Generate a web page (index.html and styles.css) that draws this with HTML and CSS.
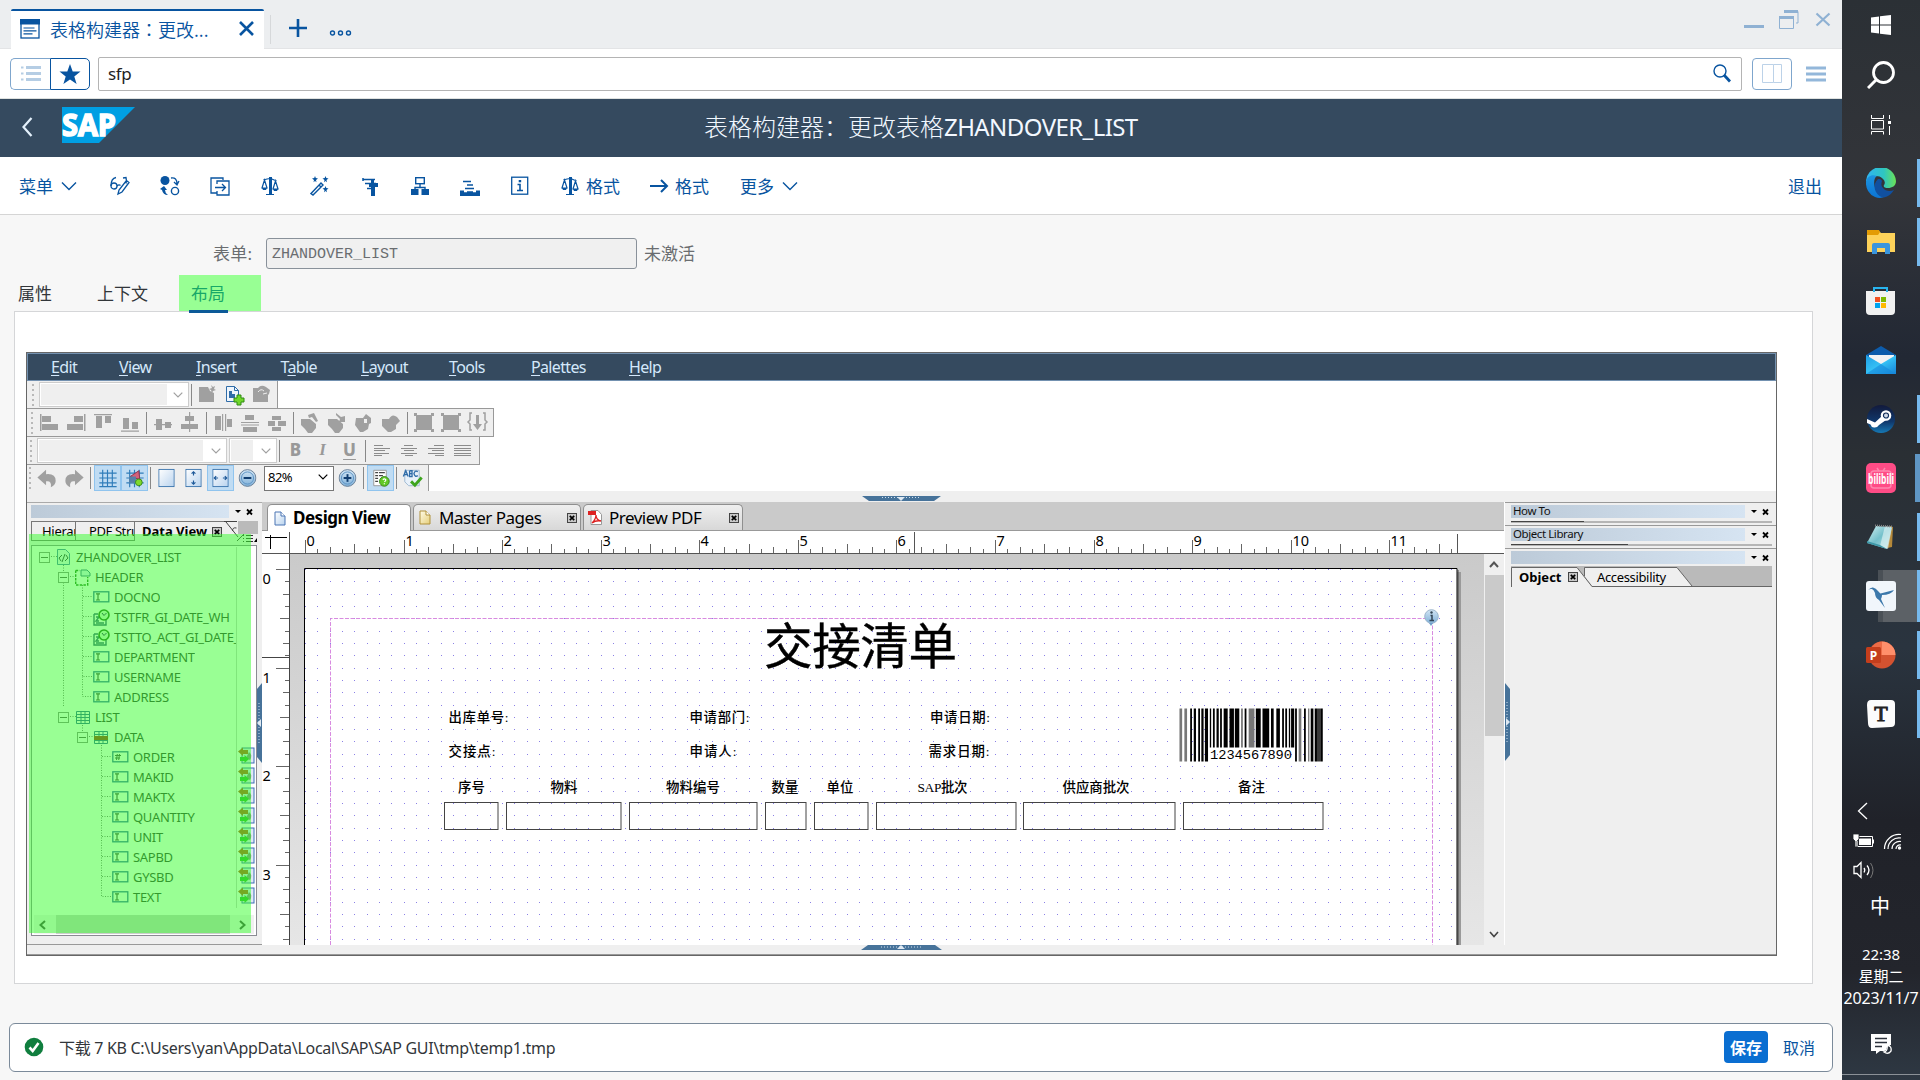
FILE: index.html
```html
<!DOCTYPE html>
<html lang="zh-CN">
<head>
<meta charset="utf-8">
<title>表格构建器：更改表格ZHANDOVER_LIST</title>
<link rel="stylesheet" href="styles.css">
</head>
<body>
<svg width="0" height="0" class="defs">
  <defs>
    <linearGradient id="gBlue" x1="0" y1="0" x2="1" y2="1"><stop offset="0" stop-color="#fff"/><stop offset="1" stop-color="#b9d3ee"/></linearGradient>
    <linearGradient id="gGold" x1="0" y1="0" x2="1" y2="1"><stop offset="0" stop-color="#fffbe8"/><stop offset="1" stop-color="#e6cf7a"/></linearGradient>
    <linearGradient id="gBall" x1="0" y1="0" x2="0" y2="1"><stop offset="0" stop-color="#d4e6f5"/><stop offset="1" stop-color="#7fb0d8"/></linearGradient>
    <linearGradient id="gEdge" x1="0" y1="0" x2="1" y2="0"><stop offset="0" stop-color="#2fb4f4"/><stop offset=".6" stop-color="#2fc6c0"/><stop offset="1" stop-color="#6be255"/></linearGradient>
    <linearGradient id="gEdge2" x1="0" y1="0" x2="0" y2="1"><stop offset="0" stop-color="#1d95e0"/><stop offset="1" stop-color="#0b74d4"/></linearGradient>
    <linearGradient id="gMail" x1="0" y1="0" x2="1" y2="1"><stop offset="0" stop-color="#1f9de6"/><stop offset=".5" stop-color="#35c1f5"/><stop offset="1" stop-color="#1583d8"/></linearGradient>
    <linearGradient id="gSteam" x1="0" y1="0" x2="0" y2="1"><stop offset="0" stop-color="#121a3c"/><stop offset=".6" stop-color="#10386c"/><stop offset="1" stop-color="#1679b5"/></linearGradient>
    <linearGradient id="gNote" x1="0" y1="0" x2="1" y2="1"><stop offset="0" stop-color="#d6f1f2"/><stop offset=".5" stop-color="#74c0cb"/><stop offset="1" stop-color="#b9e2e6"/></linearGradient>
    <symbol id="scale" viewBox="0 0 18 20"><path d="M9 1v17M5 18.500h8M2.500 3.500c3 0 4-1 6.500-1s3.500 2 6.500 2M3.500 4L1 12h5zM14.500 5L12 13h5z" fill="none" stroke="#0854a0" stroke-width="1.200"/><path d="M8 1h3v17H8zM1 12h5l-1 2H2zM12 13h5l-1 2h-3z" fill="#0854a0"/></symbol>
    <symbol id="chev" viewBox="0 0 16 10"><path d="M1 1.500l7 7 7-7" fill="none" stroke="#0854a0" stroke-width="1.400"/></symbol>
    <symbol id="field" viewBox="0 0 17 12"><rect x=".8" y=".8" width="15" height="10" fill="#fff" stroke="#2f62a0" stroke-width="1.300"/><path d="M3 2.800h4M3 9h4M5 3v6" stroke="#444" stroke-width="1.200"/></symbol>
    <symbol id="num" viewBox="0 0 17 12"><rect x=".8" y=".8" width="15" height="10" fill="#fff" stroke="#2f62a0" stroke-width="1.300"/><path d="M3 4.500h6M3 7h5M5.300 3L4.500 9M7.500 3L6.700 9" stroke="#444"/></symbol>
    <symbol id="clock" viewBox="0 0 17 17"><path d="M1 5v11h12v-5M1 5h4M3 8h3l-3 4h3M3 14h8" fill="none" stroke="#335577" stroke-width="1.400"/><circle cx="11" cy="6" r="5" fill="#d5f5d0" stroke="#1f6a12" stroke-width="1.600"/><path d="M9 4l2 2.500L13.500 4" fill="none" stroke="#225"/></symbol>
    <symbol id="bind" viewBox="0 0 17 17"><rect x="4" y="1" width="12" height="15" fill="#dfe8f6" stroke="#3d6cb4"/><path d="M11 5q4 3 1 8l-4-2z" fill="#888"/><path d="M0 4.500l5-4v2.500h5v4H5v2z" fill="#b5521c"/><path d="M11 12l-4.500-4v2H2v4h4.500v2z" fill="#35b22e"/></symbol>
    <symbol id="xbox" viewBox="0 0 10 10"><rect x=".5" y=".5" width="9" height="9" fill="#c8c8c8" stroke="#444"/><path d="M2.800 2.800l4.400 4.400M7.200 2.800L2.800 7.200" stroke="#000" stroke-width="1.700"/></symbol>
    <symbol id="ctl" viewBox="0 0 20 8"><path d="M0 2h6L3 5z"/><path d="M12 1.500l5 5M17 1.500l-5 5" stroke="#000" stroke-width="1.800"/></symbol>
    <symbol id="page" viewBox="0 0 12 15"><path d="M1 1h6l4 4v9H1z" fill="url(#gBlue)" stroke="#4b74b4"/><path d="M7 1v4h4" fill="#fff" stroke="#4b74b4"/></symbol>
    <symbol id="pageg" viewBox="0 0 12 15"><path d="M1 1h6l4 4v9H1z" fill="url(#gGold)" stroke="#b0913a"/><path d="M7 1v4h4" fill="#fff" stroke="#b0913a"/></symbol>
    <symbol id="drop" viewBox="0 0 10 6"><path d="M.7.700L5 5 9.300.700" fill="none" stroke="currentColor" stroke-width="1.200"/></symbol>
    <symbol id="ball" viewBox="0 0 19 19"><circle cx="9.500" cy="9.500" r="8.700" fill="url(#gBall)" stroke="#6a8098"/><circle cx="9.500" cy="9.500" r="6.300" fill="none" stroke="#5d93c4"/><path d="M5.500 9.500h8" stroke="#123e70" stroke-width="2"/></symbol>
    <symbol id="sheet" viewBox="0 0 17 19"><rect x=".5" y=".5" width="16" height="18" fill="url(#gBlue)" stroke="#2f6ca8"/></symbol>
  </defs>
</svg>

<div class="screen">
<main class="app">
  <header class="tabstrip">
    <div class="wtab">
      <svg width="20" height="20" viewBox="0 0 20 20"><rect x="1" y="1" width="18" height="18" fill="#fff" stroke="#0854a0" stroke-width="1.300"/><path d="M0 0h20v5.500H0z" fill="#0854a0"/><path d="M3.500 9h11M3.500 11.800h13M3.500 14.800h9" stroke="#0854a0" stroke-width="1.200"/></svg>
      <span class="wtab-t">表格构建器<span class="colon" lang="zh-TW">：</span>更改...</span>
      <svg width="15" height="15" viewBox="0 0 15 15"><path d="M1 1l13 13M14 1L1 14" stroke="#0854a0" stroke-width="2.600"/></svg>
    </div>
    <i class="vsep"></i>
    <svg class="plus" width="18" height="18" viewBox="0 0 18 18"><path d="M9 0v18M0 9h18" stroke="#0854a0" stroke-width="2.600"/></svg>
    <svg class="dots" width="24" height="8" viewBox="0 0 24 8"><g fill="none" stroke="#0854a0" stroke-width="1.400"><circle cx="3.500" cy="4" r="2"/><circle cx="11.500" cy="4" r="2"/><circle cx="19.500" cy="4" r="2"/></g></svg>
    <svg class="winctl" width="88" height="22" viewBox="0 0 88 22"><g stroke="#8fb1d3" fill="none"><path d="M0 17.500h20" stroke-width="3"/><path d="M35.500 8v11.500h14V8M40 2.500h14V14h-2" /><path d="M35 8.500h15M40 2.500h14" stroke-width="3"/><path d="M72.500 4.500l13 12M85.500 4.500l-13 12" stroke-width="2.200"/></g></svg>
  </header>
  <section class="cmd">
    <div class="seg"><span class="seg1"><svg width="22" height="18" viewBox="0 0 22 18"><path d="M6 2.500h15M6 8.500h15M6 14.500h15" stroke="#b5cde4" stroke-width="3"/><path d="M1 2.500h2.500M1 8.500h2.500M1 14.500h2.500" stroke="#b5cde4" stroke-width="2"/></svg></span><span class="seg2"><svg width="22" height="21" viewBox="0 0 22 21"><path d="M11 0l2.700 7.600H21.500l-6.200 4.800L17.600 20 11 15.500 4.400 20l2.300-7.600L.5 7.600h7.800z" fill="#0854a0"/></svg></span></div>
    <div class="cmdin"><span>sfp</span><svg width="20" height="19" viewBox="0 0 20 19"><circle cx="8" cy="7" r="6" fill="none" stroke="#0854a0" stroke-width="1.400"/><path d="M12 11l6 6.500" stroke="#0854a0" stroke-width="2.800"/></svg></div>
    <div class="split"><svg width="20" height="20" viewBox="0 0 20 20"><path d="M.5.500h11v18H.5zM11.500.500h8v18h-8" fill="none" stroke="#bcd2e8"/></svg></div>
    <svg class="burger" width="20" height="16" viewBox="0 0 20 16"><path d="M0 2h20M0 8h20M0 14h20" stroke="#93b7da" stroke-width="3"/></svg>
  </section>
  <section class="shell">
    <svg width="12" height="20" viewBox="0 0 12 20"><path d="M9.500 1L1.500 10l8 9" fill="none" stroke="#e4f1fc" stroke-width="2.200"/></svg>
    <svg class="sap" width="73" height="36" viewBox="0 0 73 36"><path d="M0 0h73L37 36H0z" fill="#009fe3"/><text x="0" y="29" textLength="54" lengthAdjust="spacingAndGlyphs" class="saptx">SAP</text></svg>
    <h1>表格构建器：更改表格<span>ZHANDOVER_LIST</span></h1>
  </section>
  <nav class="bar">
    <span class="mnu">菜单<svg width="16" height="10"><use href="#chev"/></svg></span>
    <i><svg width="20" height="20" viewBox="0 0 20 20"><g fill="none" stroke="#0854a0" stroke-width="1.300"><circle cx="4" cy="10" r="3"/><path d="M1 10C1 5 3 2 6 1.500M7 10q2-2 3.500-.5M13 2l3-.5q1 4 0 6M8 18l1-4 7.500-9.500 2.500 2L12 16z"/></g></svg></i>
    <i><svg width="20" height="20" viewBox="0 0 20 20"><circle cx="5" cy="4.500" r="4.500" fill="#0854a0"/><circle cx="15" cy="15" r="3.600" fill="none" stroke="#0854a0" stroke-width="1.400"/><path d="M11 2q6-1 6 6M14 6l3 3 2-4" fill="none" stroke="#0854a0" stroke-width="1.300"/><path d="M0 13l4-3 3 4H5q0 3 3 5-5 0-6-5z" fill="#0854a0"/></svg></i>
    <i><svg width="20" height="20" viewBox="0 0 20 20"><path d="M7 17H1V2h12v2M7 8V5h12v14H7v-4M5 11.500h10M12 8l3.500 3.500L12 15" fill="none" stroke="#0854a0" stroke-width="1.300"/></svg></i>
    <i><svg width="18" height="20"><use href="#scale"/></svg></i>
    <i><svg width="20" height="20" viewBox="0 0 20 20"><path d="M1 17.500L11 7l2 2L3 19zM9 9l2 2" fill="none" stroke="#0854a0" stroke-width="1.400"/><path d="M5 0l.8 2L8 2.500 6 4l.5 2.300L5 5 3.500 6.300 4 4 2 2.500l2.200-.5zM15.500 0l.8 2 2.200.5-2 1.500.5 2.300-1.500-1.300L14 6.300l.5-2.300-2-1.500 2.200-.5zM15.500 10l.8 2 2.200.5-2 1.500.5 2.300-1.500-1.300-1.500 1.300.5-2.300-2-1.500 2.200-.5z" fill="#0854a0"/></svg></i>
    <i><svg width="18" height="20" viewBox="0 0 18 20"><path d="M2 3.500h12M2 2v3M4 7.500h11M6 12.500h5" stroke="#0854a0" stroke-width="1.500"/><path d="M10 3h3v4h4v4h-3v9h-4v-9H8V8h2z" fill="#0854a0"/></svg></i>
    <i><svg width="18" height="20" viewBox="0 0 18 20"><rect x="4.700" y="1.700" width="8.600" height="6" fill="none" stroke="#0854a0" stroke-width="1.400"/><path d="M9 8v4M4 13v-1.500h10V13" fill="none" stroke="#0854a0" stroke-width="1.400"/><path d="M0 13h7.500v6H0zM10.500 13H18v6h-7.500z" fill="#0854a0"/></svg></i>
    <i><svg width="20" height="20" viewBox="0 0 20 20"><path d="M3 5.500h8M7 9h6M5 12.500h9" stroke="#0854a0" stroke-width="1.700"/><path d="M0 14.500h4v1.800h3v-1h6v1h3v-1.800h4V20H0z" fill="#0854a0"/></svg></i>
    <i><svg width="18" height="20" viewBox="0 0 18 20"><rect x=".7" y="1.200" width="16" height="17" fill="none" stroke="#0854a0" stroke-width="1.300"/><path d="M6.500 8.500H9v6M6 14.500h6" fill="none" stroke="#0854a0" stroke-width="1.600"/><path d="M7.700 4h2.500v2.300H7.700z" fill="#0854a0"/></svg></i>
    <span class="b1"><svg width="18" height="20"><use href="#scale"/></svg>格式</span>
    <span class="b2"><svg width="19" height="14" viewBox="0 0 19 14"><path d="M0 7h17M11 1l6 6-6 6" fill="none" stroke="#0854a0" stroke-width="2"/></svg>格式</span>
    <span class="b3">更多<svg width="16" height="10"><use href="#chev"/></svg></span>
    <span class="exit">退出</span>
  </nav>
  <section class="body">
    <div class="formrow"><label>表单:</label><div class="ro"><span>ZHANDOVER_LIST</span></div><span>未激活</span></div>
    <div class="tabs"><span class="t1">属性</span><span class="t2">上下文</span><span class="t3">布局</span></div>
    <div class="panel">
      <div class="designer">
        <div class="menu"><span style="width:68px"><u>E</u>dit</span><span style="width:77px"><u>V</u>iew</span><span style="width:84.500px"><u>I</u>nsert</span><span style="width:80.500px">T<u>a</u>ble</span><span style="width:88px"><u>L</u>ayout</span><span style="width:82px"><u>T</u>ools</span><span style="width:98px"><u>P</u>alettes</span><span><u>H</u>elp</span></div>
        <div class="tb r1"><i class="grip"></i><div class="combo c1"><b></b><svg width="10" height="6"><use href="#drop"/></svg></div><i class="sp"></i>
          <svg class="ic" viewBox="0 0 27 27"><path d="M5 6h9l2 4 4 2v9H5zM17 4l2 2 2-1-1 3 2 1-3 1-1 2-1-3-2-1 3-1z" fill="#a0a0a0"/></svg>
          <svg class="ic" viewBox="0 0 27 27"><path d="M5.500 5.500h8l4 4v11h-12z" fill="#eef5fc" stroke="#2f6ca8"/><path d="M13.500 5.500v4h4" fill="none" stroke="#2f6ca8"/><path d="M8 10h3v3h3v4H8z" fill="#2f6ca8"/><path d="M16 14h4v3h3v4h-3v3h-4v-3h-3v-4h3z" fill="#6fd62a" stroke="#2f8a12"/></svg>
          <svg class="ic" viewBox="0 0 27 27"><path d="M5 7h5q3-4 8-1l4 3-1 4-1 1v7H5z" fill="#a0a0a0"/><path d="M10 11q3-4 6-1M15 13l4-1" stroke="#eee" fill="none"/></svg></div>
        <div class="tb r2"><i class="grip"></i>
          <svg class="ic" viewBox="0 0 27 27"><path d="M5 5h1.500v17H5zM7 7h9v6H7zM7 15h16v6H7z"/></svg>
          <svg class="ic" viewBox="0 0 27 27"><path d="M22 5h1.500v17H22zM12 7h9v6h-9zM5 15h16v6H5z"/></svg>
          <svg class="ic" viewBox="0 0 27 27"><path d="M5 5h18v1.200H5zM7 7h6v12H7zM16 7h6v7h-6z"/></svg>
          <svg class="ic" viewBox="0 0 27 27"><path d="M5 21.500h18v1.200H5zM7 9h6v11H7zM16 13h6v7h-6z"/></svg><i class="sp"></i>
          <svg class="ic" viewBox="0 0 27 27"><path d="M5 15h18v1.200H5zM7 10h6v11H7zM16 13h6v6h-6z"/></svg>
          <svg class="ic" viewBox="0 0 27 27"><path d="M13 3h1.200v20H13zM9 7h9v5H9zM5 15h17v5H5z"/></svg><i class="sp"></i>
          <svg class="ic" viewBox="0 0 27 27"><path d="M6 7h6v14H6zM13 5h1.200v17H13zM16 5h1.200v17H16zM18 10h5v8h-5z"/></svg>
          <svg class="ic" viewBox="0 0 27 27"><path d="M9 6h9v5H9zM5 13h18v1H5zM5 15.500h18v1H5zM7 18h14v5H7z"/></svg>
          <svg class="ic" viewBox="0 0 27 27"><path d="M9 7h9v4H9zM5 12h7v5H5zM15 12h8v5h-8zM9 18h9v4H9z"/></svg><i class="sp"></i>
          <svg class="ic" viewBox="0 0 27 27"><path d="M5 10h9l6 5v4l-4 5h-4l-3-4-4-4zM12 6l6-2 4 8-2 1-4-5-3 1z"/></svg>
          <svg class="ic" viewBox="0 0 27 27"><path d="M5 10h9l6 5v4l-4 5h-4l-3-4-4-4zM13 4l5 4 4-1v6h-6l1-3-4-4z"/></svg>
          <svg class="ic" viewBox="0 0 27 27"><path d="M6 9h7l3-4 5 4v5l-2 1-1 5-5 3h-3l-5-7zM14 10v4h3v-4z" fill-rule="evenodd"/></svg>
          <svg class="ic" viewBox="0 0 27 27"><path d="M5 10h7q3-6 8-2l3 4-4 4v4l-5 3h-3l-6-6z"/></svg><i class="sp"></i>
          <svg class="ic" viewBox="0 0 27 27"><path d="M6 6h16v15H6zM4 4h3v3H4zM21 4h3v3h-3zM4 20h3v3H4zM21 20h3v3h-3z"/></svg>
          <svg class="ic" viewBox="0 0 27 27"><path d="M6 6h16v15H6zM4 4h3v3H4zM21 4h3v3h-3zM4 20h3v3H4zM21 20h3v3h-3z"/></svg>
          <svg class="ic" viewBox="0 0 27 27"><path d="M8 4H6v7l-2 2 2 2v6h2M19 4h2v7l2 2-2 2v6h-2" fill="none" stroke="#a0a0a0" stroke-width="1.500"/><path d="M12 6h3v9h3l-4.500 6L9 15h3z"/></svg></div>
        <div class="tb r3"><i class="grip"></i><div class="combo c2"><b></b><svg width="10" height="6"><use href="#drop"/></svg></div><div class="combo c3"><b></b><svg width="10" height="6"><use href="#drop"/></svg></div><i class="sp"></i>
          <span class="ic fb">B</span><span class="ic fi">I</span><span class="ic fu">U</span><i class="sp"></i>
          <svg class="ic" viewBox="0 0 27 27"><path d="M6 8.500h9M6 11.500h16M6 13.500h11M6 16.500h15M6 18.500h8" stroke="#8c8c8c"/></svg>
          <svg class="ic" viewBox="0 0 27 27"><path d="M9 8.500h9M6 11.500h16M9 13.500h10M6 16.500h16M10 18.500h8" stroke="#8c8c8c"/></svg>
          <svg class="ic" viewBox="0 0 27 27"><path d="M12 8.500h10M6 11.500h16M10 13.500h12M6 16.500h16M13 18.500h9" stroke="#8c8c8c"/></svg>
          <svg class="ic" viewBox="0 0 27 27"><path d="M5 8.500h17M5 11.500h17M5 13.500h17M5 16.500h17M5 18.500h17" stroke="#8c8c8c"/></svg></div>
        <div class="tb r4"><i class="grip"></i>
          <svg class="ic" viewBox="0 0 27 27"><path d="M3 13l9-8v4.500q10-1 10 7 0 4-5 6.500 1-7-5-6v4z"/></svg>
          <svg class="ic" viewBox="0 0 27 27"><path d="M23 13l-9-8v4.500q-10-1-10 7 0 4 5 6.500-1-7 5-6v4z"/></svg><i class="sp"></i>
          <svg class="ic hot" viewBox="0 0 27 27"><path d="M5 8.500h18M5 13.500h18M5 18.500h18M8.500 5v18M13.500 5v18M18.500 5v18M5 22.500h18" stroke="#2f7cba" stroke-width="1.200"/></svg>
          <svg class="ic hot" viewBox="0 0 27 27"><path d="M5 8.500h18M5 13.500h18M5 18.500h18M8.500 5v18M13.500 5v18M18.500 5v18" stroke="#2f7cba" stroke-width="1.200"/><path d="M9 12l9-6 1 9z" fill="#d5607a" stroke="#8a3350"/><path d="M8 12h7v7H8z" fill="#5580a8"/><circle cx="18" cy="18" r="3.500" fill="#7fd82c" stroke="#3a8a1a"/></svg><i class="sp s5"></i>
          <svg class="ic" viewBox="0 0 27 27"><use href="#sheet" x="5" y="4" width="17" height="19"/></svg>
          <svg class="ic" viewBox="0 0 27 27"><use href="#sheet" x="5" y="4" width="17" height="19"/><path d="M13.500 7v4M11.500 9l2-2 2 2M13.500 20v-4M11.500 18l2 2 2-2" fill="none" stroke="#1f5a9a" stroke-width="1.200"/></svg>
          <svg class="ic hot" viewBox="0 0 27 27"><use href="#sheet" x="5" y="4" width="17" height="19"/><path d="M7 13.500h4M9 11.500l-2 2 2 2M20 13.500h-4M18 11.500l2 2-2 2" fill="none" stroke="#1f5a9a" stroke-width="1.200"/></svg>
          <svg class="ic" viewBox="0 0 27 27"><use href="#ball" x="4" y="4" width="19" height="19"/></svg>
          <div class="zoom"><span>82%</span><svg width="10" height="6"><use href="#drop"/></svg></div>
          <svg class="ic" viewBox="0 0 27 27"><use href="#ball" x="4" y="4" width="19" height="19"/><path d="M13.500 9.500v8" stroke="#123e70" stroke-width="2"/></svg><i class="sp"></i>
          <svg class="ic hot" viewBox="0 0 27 27"><path d="M6.500 5.500h13v16h-13z" fill="#fff" stroke="#999"/><path d="M8 8h3M12 8h6M8 11h3M12 11h4M8 14h3M8 17h3" stroke="#444" stroke-width="1.300"/><circle cx="17.500" cy="17" r="5" fill="#63c927" stroke="#39851b"/><path d="M16 15.500q1.500-2 3 0 0 1-1.500 2M17.500 19v1" fill="none" stroke="#fff" stroke-width="1.300"/></svg><i class="sp s5"></i>
          <svg class="ic" viewBox="0 0 27 27"><path d="M5.500 5.500h15v16h-11l-4-4z" fill="#e8f1fa" stroke="#9db8d2"/><path d="M4 12l2.500-6 2.500 6M5 10h3M10.500 6v6h2.500v-3h-2.500M13 9V6h-2.500M19 7q-3-2-4 2 1 4 4 2" fill="none" stroke="#2f6ca8" stroke-width="1.400"/><path d="M12 17l4 4 7-8" fill="none" stroke="#3fa51f" stroke-width="3"/></svg></div>
        <div class="strip"><svg width="79" height="5" viewBox="0 0 79 5"><path d="M0 0h79l-7 5H7z" fill="#47739a"/><path d="M20 1.500h38" stroke="#cfe0ee" stroke-dasharray="1 2"/><path d="M35 1h8l-4 4z" fill="#dfe9f2"/></svg></div>
        <div class="work">
          <aside class="left">
            <div class="ltitle"><b></b><svg width="20" height="8"><use href="#ctl"/></svg></div>
            <div class="ltabs"><span class="l1">Hierarchy</span><span class="l2">PDF Structure</span><span class="l3">Data View<svg width="10" height="10"><use href="#xbox"/></svg></span><svg class="lcorner" width="34" height="21" viewBox="0 0 34 21"><path d="M14 0h20v13H14z" fill="#bababa"/><path d="M2 1l12 15M0 .5h13M13 20l7-7M12.500 7q-4-1-4 3" fill="none" stroke="#444"/><path d="M22 14.500h7M22 17.500h7M22 20.500h7M19 14.500h1M19 17.500h1M19 20.500h1" stroke="#333"/><path d="M33 17v4h-3z"/></svg></div>
            <div class="tree">
              <svg class="guides" width="120" height="360" viewBox="0 0 120 360"><g fill="none" stroke="#777" stroke-dasharray="1 1.500"><path d="M31.500 20V162M50.500 40V131.500H60M51 51.500h10M51 71.500h10M51 91.500h10M51 111.500h10M50.500 180v8M69.500 200V351.500H80M70 211.500h10M70 231.500h10M70 251.500h10M70 271.500h10M70 291.500h10M70 311.500h10M70 331.500h10M19 11.500h6M38 31.500h6M50.500 131.500V151.500H60M38 171.500h6M57 191.500h6"/></g></svg>
              <div class="n d0"><em></em><svg width="13" height="16" viewBox="0 0 13 16"><path d="M.5.500h8l4 4v11H.5z" fill="#eaf2fb" stroke="#4a7cae"/><path d="M5 6L2 9l2 3M8 5l-3 8M9 6l2 3-3 3" fill="none" stroke="#334"/></svg><span>ZHANDOVER_LIST</span></div>
              <div class="n d1"><em></em><svg width="16" height="17" viewBox="0 0 16 17"><path d="M.7 1.500v14.500h12V8M.7 1.500h4" fill="none" stroke="#267c1d" stroke-width="1.400" stroke-dasharray="2.500 1.200"/><path d="M6 1h6l3 3v3H6z" fill="#dfeefa" stroke="#3a6a8c"/></svg><span>HEADER</span></div>
              <div class="n d2"><svg width="17" height="12"><use href="#field"/></svg><span>DOCNO</span></div>
              <div class="n d2"><svg width="17" height="17"><use href="#clock"/></svg><span>TSTFR_GI_DATE_WH</span></div>
              <div class="n d2"><svg width="17" height="17"><use href="#clock"/></svg><span>TSTTO_ACT_GI_DATE_</span></div>
              <div class="n d2"><svg width="17" height="12"><use href="#field"/></svg><span>DEPARTMENT</span></div>
              <div class="n d2"><svg width="17" height="12"><use href="#field"/></svg><span>USERNAME</span></div>
              <div class="n d2"><svg width="17" height="12"><use href="#field"/></svg><span>ADDRESS</span></div>
              <div class="n d1"><em></em><svg width="14" height="13" viewBox="0 0 14 13"><path d="M.5.500h13v12H.5zM.5 3.500h13M.5 6.500h13M.5 9.500h13M5 .5v12M9 .5v12" fill="none" stroke="#2f6296"/></svg><span>LIST</span></div>
              <div class="n d2 g"><em></em><svg width="14" height="13" viewBox="0 0 14 13"><path d="M.5.500h13v12H.5zM.5 3.500h13M.5 9.500h13M5 .5v12M9 .5v12" fill="none" stroke="#2f6296"/><path d="M0 5h14v4H0z" fill="#9a3412"/></svg><span>DATA</span></div>
              <div class="n d3"><svg width="17" height="12"><use href="#num"/></svg><span>ORDER</span><svg class="bd"><use href="#bind"/></svg></div>
              <div class="n d3"><svg width="17" height="12"><use href="#field"/></svg><span>MAKID</span><svg class="bd"><use href="#bind"/></svg></div>
              <div class="n d3"><svg width="17" height="12"><use href="#field"/></svg><span>MAKTX</span><svg class="bd"><use href="#bind"/></svg></div>
              <div class="n d3"><svg width="17" height="12"><use href="#field"/></svg><span>QUANTITY</span><svg class="bd"><use href="#bind"/></svg></div>
              <div class="n d3"><svg width="17" height="12"><use href="#field"/></svg><span>UNIT</span><svg class="bd"><use href="#bind"/></svg></div>
              <div class="n d3"><svg width="17" height="12"><use href="#field"/></svg><span>SAPBD</span><svg class="bd"><use href="#bind"/></svg></div>
              <div class="n d3"><svg width="17" height="12"><use href="#field"/></svg><span>GYSBD</span><svg class="bd"><use href="#bind"/></svg></div>
              <div class="n d3"><svg width="17" height="12"><use href="#field"/></svg><span>TEXT</span><svg class="bd"><use href="#bind"/></svg></div>
              <div class="hscroll"><svg width="7" height="10" viewBox="0 0 7 10"><path d="M6 1L1.500 5 6 9" fill="none" stroke="#444" stroke-width="2"/></svg><b></b><svg width="7" height="10" viewBox="0 0 7 10"><path d="M1 1l4.500 4L1 9" fill="none" stroke="#444" stroke-width="2"/></svg></div>
            </div>
            <div class="highlight"></div>
            <svg class="spl" width="5" height="80" viewBox="0 0 5 80"><path d="M5 0v80l-5-6V6z" fill="#47739a"/><path d="M2 20v40" stroke="#cfe0ee" stroke-dasharray="1 2"/><path d="M4 36v8l-4-4z" fill="#dfe9f2"/></svg>
          </aside>
          <section class="center">
            <div class="vtabs">
              <div class="vt a"><svg width="12" height="15"><use href="#page"/></svg><span>Design View</span></div>
              <div class="vt b"><svg width="12" height="15"><use href="#pageg"/></svg><span>Master Pages</span><svg width="10" height="10"><use href="#xbox"/></svg></div>
              <div class="vt c"><svg width="14" height="15" viewBox="0 0 14 15"><path d="M3 .5h7l3.500 4v10H3z" fill="#fff" stroke="#999"/><path d="M0 1h8v4H0z" fill="#d22"/><path d="M4 13q4-4 4-8 0 5 5 6-5-1-9 2z" fill="none" stroke="#d22" stroke-width="1.300"/></svg><span>Preview PDF</span><svg width="10" height="10"><use href="#xbox"/></svg></div>
            </div>
            <svg id="hruler" class="hruler" width="1242" height="23" viewBox="262 531 1242 23"></svg>
            <div class="canvasrow">
              <svg id="vruler" class="vruler" width="28" height="391" viewBox="262 554 28 391"></svg>
              <svg id="sheet-canvas" class="sheet" width="1194" height="391" viewBox="290 554 1194 391"></svg>
              <div class="vscroll"><svg width="10" height="7" viewBox="0 0 10 7"><path d="M1 6l4-4.500L9 6" fill="none" stroke="#555" stroke-width="2"/></svg><b></b><svg width="10" height="7" viewBox="0 0 10 7"><path d="M1 1l4 4.500L9 1" fill="none" stroke="#444" stroke-width="1.600"/></svg></div>
            </div>
          </section>
          <aside class="right">
            <div class="rp"><div class="rt"><b>How To</b><svg width="20" height="8"><use href="#ctl"/></svg></div><p><i style="width:73px"></i></p></div>
            <div class="rp"><div class="rt"><b>Object Library</b><svg width="20" height="8"><use href="#ctl"/></svg></div><p><i style="width:117px"></i></p></div>
            <div class="rp last"><div class="rt"><b></b><svg width="20" height="8"><use href="#ctl"/></svg></div>
              <div class="rtabs"><svg class="rtbg" width="261" height="21" viewBox="0 0 261 21"><path d="M0 0h261v21H0z" fill="#bababa"/><path d="M.5 21V1.500H66l15 19.500H0z" fill="#efefef"/><path d="M73.500 10V1.500H166l15 18.500H81z" fill="#efefef"/><path d="M.5 21V1.500H66L81 20.500H261M73.500 10V1.500H166l15 18.500" fill="none" stroke="#666"/></svg><strong>Object</strong><svg width="10" height="10"><use href="#xbox"/></svg><span>Accessibility</span></div>
            </div>
            <svg class="spr" width="5" height="78" viewBox="0 0 5 78"><path d="M0 0v78l5-6V6z" fill="#47739a"/><path d="M2 19v40" stroke="#cfe0ee" stroke-dasharray="1 2"/><path d="M1 35v8l4-4z" fill="#dfe9f2"/></svg>
          </aside>
        </div>
        <div class="foot"><svg width="81" height="5" viewBox="0 0 81 5"><path d="M0 5h81l-7-5H7z" fill="#47739a"/><path d="M20 2h40" stroke="#cfe0ee" stroke-dasharray="1 2"/><path d="M36 4h8l-4-4z" fill="#dfe9f2"/></svg></div>
      </div>
    </div>
    <footer class="status">
      <svg width="20" height="20" viewBox="0 0 20 20"><circle cx="10" cy="10" r="9.300" fill="#107e3e"/><path d="M5.500 10.500l3.200 3.500 5.800-8" fill="none" stroke="#fff" stroke-width="2.600"/></svg>
      <span class="msg">下载 7 KB C:\Users\yan\AppData\Local\SAP\SAP GUI\tmp\temp1.tmp</span>
      <button>保存</button><a>取消</a>
    </footer>
  </section>
</main>

<aside class="task">
  <div class="s50"><svg width="20" height="20" viewBox="0 0 20 20"><path d="M0 2.500l8-1v8H0zM9 1.300L20 0v9.500H9zM0 10.500h8v8l-8-1zM9 10.500h11V20L9 18.700z" fill="#fff"/></svg></div>
  <div class="s50"><svg width="28" height="28" viewBox="0 0 28 28"><circle cx="16.500" cy="11.500" r="10" fill="none" stroke="#fff" stroke-width="2.800"/><path d="M9 19l-8 8" stroke="#fff" stroke-width="3"/></svg></div>
  <div class="s50"><svg width="21" height="20" viewBox="0 0 21 20"><path d="M.5 0v3.500h12V0M.5 5.500h12v8.500H.5zM.5 19.500v-3h12v3M18.500 0v4M18.500 11v9" fill="none" stroke="#fff"/><path d="M17 6h3v3h-3z" fill="#fff"/></svg></div>
  <div class="app1 run"><svg width="30" height="30" viewBox="0 0 30 30"><path d="M0 15a15 15 0 0 1 30-2c0 5-4 7-8 7-3 0-5-1-4-3 3-4-3-10-9-9-5 0-8 3-9 7z" fill="url(#gEdge)"/><path d="M0 14C1 8 6 6 11 8c-4 2-4 12 1 16 4 3 8 3 12 0-4 6-10 7-15 5A15 15 0 0 1 0 14z" fill="url(#gEdge2)"/><path d="M12 11c-6 5-4 16 5 18.500 5-.5 8-3 11-7.500-4 2-9 1-11-2-2-2-2-4-1-7-1-2-2-2-4-2z" fill="#11509f"/></svg></div>
  <div class="app1 run"><svg width="28" height="24" viewBox="0 0 28 24"><path d="M0 1h12l2 2h14v19H0z" fill="#fdd25a"/><path d="M0 0h12l1 2-2 3H0z" fill="#e39c05"/><path d="M5 24v-9q0-2 2-2h14q2 0 2 2v9h-5v-6H10v6z" fill="#3a95dd"/></svg></div>
  <div class="app1"><svg width="30" height="30" viewBox="0 0 30 30"><path d="M0 5h29v20q0 4-4 4H4q-4 0-4-4z" fill="#f1f1f1"/><path d="M8 6V2h13v4" fill="none" stroke="#28b4ee" stroke-width="2"/><path d="M9 11h5v5H9z" fill="#f25022"/><path d="M15 11h5v5h-5z" fill="#7fba00"/><path d="M9 17h5v5H9z" fill="#00a4ef"/><path d="M15 17h5v5h-5z" fill="#ffb900"/></svg></div>
  <div class="app1"><svg width="30" height="28" viewBox="0 0 30 28"><path d="M0 9L15 0l15 9v5H0z" fill="#0d5cab"/><path d="M3 9h25v7L15 22 3 16z" fill="#f3f3f3"/><path d="M0 9l15 9 15-9v19H0z" fill="url(#gMail)"/><path d="M15 18l15 10H0z" fill="#1589dc" opacity=".6"/></svg></div>
  <div class="app1 run"><svg width="28" height="28" viewBox="0 0 28 28"><circle cx="14" cy="14" r="14" fill="url(#gSteam)"/><circle cx="19" cy="10.500" r="4.200" fill="none" stroke="#fff" stroke-width="2.200"/><circle cx="19" cy="10.500" r="2" fill="#cfd8e6"/><path d="M0 14l8 3.500L15 11l4 4-7 5q-2 3-5 2.500-3-.5-3.500-3L0 18z" fill="#fff"/></svg></div>
  <div class="app1 run wide"><svg width="30" height="30" viewBox="0 0 30 30"><rect width="30" height="30" rx="5" fill="#ff4c86"/><rect x="5" y="8" width="20" height="17" rx="3" fill="none" stroke="#ff86ae" stroke-width="1.500"/><path d="M11 5l2 3M19 5l-2 3" stroke="#ff86ae" stroke-width="1.500"/><text x="2" y="20.500" textLength="26" lengthAdjust="spacingAndGlyphs" class="bili">bilibili</text></svg></div>
  <div class="app1 run"><svg width="30" height="30" viewBox="0 0 30 30"><path d="M24 4l3 1-1 20-5 1z" fill="#b5893a"/><path d="M10 4l16 1-5 22-20-6z" fill="url(#gNote)"/><path d="M19 4l7 1-4 22-8-3z" fill="#e9f6f7" opacity=".6"/><path d="M1 19l13 4 7 4-20-6z" fill="#3e98a8"/><path d="M9 3.500l17 1" stroke="#888" stroke-width="2" stroke-dasharray="1 1"/></svg></div>
  <div class="app1 run cur"><svg width="30" height="30" viewBox="0 0 30 30"><rect width="30" height="30" rx="3" fill="#f1f6fb"/><path d="M2 9q3-3 5-2.500 3 .5 5 3.500 2 2 2.500 2.500L28 9q-3 5-12 5 0 2-1 4l4 9-6-8q-4-2-4-7-1-3-3-4-2-.5-4 1z" fill="#3c78ab"/></svg></div>
  <div class="app1 run"><svg width="30" height="28" viewBox="0 0 30 28"><circle cx="16" cy="14" r="13.500" fill="#d35230"/><path d="M16 .5A13.500 13.500 0 0 1 29.500 14H16z" fill="#ff8f6b"/><path d="M16 .5V14H3A13.500 13.500 0 0 1 16 .5z" fill="#ed6c47"/><rect x="0" y="6" width="15" height="16" rx="1.500" fill="#c43e1c"/><text x="3.800" y="18.500" class="pp">P</text></svg></div>
  <div class="app1 run"><svg width="30" height="30" viewBox="0 0 30 30"><path d="M5 1h20q4 0 4 4v19q0 4-4 4L6 29q-4 0-4-5L1 6q0-5 4-5z" fill="#fcfcfc"/><text x="15" y="22" text-anchor="middle" class="ty">T</text></svg></div>
  <div class="tray">
    <svg width="78" height="100" viewBox="0 0 78 100"><g fill="none" stroke="#fff"><path d="M25 3l-8.500 8L25 19" stroke-width="1.300"/><path d="M15.500 36.500h15v10h-15zM31.500 39.500v4" /><path d="M42.500 49a14.500 14.500 0 0 1 16.500-14.500M46 49a11 11 0 0 1 13-11M50 49a7.500 7.500 0 0 1 9-7.500M54 49a4 4 0 0 1 5-4" stroke-width="1.200"/><path d="M12 66.500h3l4-4v15l-4-4h-3zM22 68q1.500 2 0 4.500M25 65.500q4 4.500 0 9.500" stroke-width="1.300"/><path d="M28.500 63q5 7 0 15" stroke="#777"/></g><path d="M17 38.500h12v6.500H17z" fill="#fff"/><path d="M11 34h6v5l-2 2v6h-2v-6l-2-2z" fill="#fff" stroke="#202328" stroke-width=".8"/><circle cx="57.500" cy="48" r="1.700" fill="#fff"/></svg>
    <div class="ime">中</div>
    <div class="clk">22:38</div><div class="clk">星期二</div><div class="clk date">2023/11/7</div>
    <svg class="noti" width="21" height="21" viewBox="0 0 21 21"><path d="M0 0h20v11q-4 0-5 5-1 1-2 1H9l-4 3v-3H0z" fill="#fff"/><path d="M4 4.500h12M4 8.500h12M4 12.500h7" stroke="#2c323c" stroke-width="1.300"/><path d="M16 11q5 1 4 6-3 4-7 1 4-1 3-7z" fill="none" stroke="#fff" stroke-width="1.300"/></svg>
  </div>
  <i class="peek"></i>
</aside>
</div>
<script src="script.js"></script>
</body>
</html>
```
FILE: styles.css
```css
* { box-sizing: border-box; }
body { margin: 0; overflow: hidden; font-family: "Noto Sans", "Noto Sans CJK SC", sans-serif; font-size: 16px; color: #32363a; }
svg { display: block; flex: none; }
i { font-style: normal; }
.defs { position: absolute; }
.screen { display: flex; width: 1920px; height: 1080px; }
.app { width: 1842px; height: 1080px; display: flex; flex-direction: column; background: #f7f7f7; }

/* window tabs */
.tabstrip { height: 49px; background: #eceef0; border-bottom: 1px solid #e3e4e6; display: flex; align-items: flex-start; padding: 9px 18px 0 11px; flex: none; }
.wtab { width: 253px; height: 40px; background: #fff; border-top: 2px solid #0854a0; border-radius: 2px 2px 0 0; display: flex; align-items: center; padding: 0 10px 3px 9px; color: #0854a0; }
.wtab-t { margin-left: 10px; width: 190px; font: 350 18px/34px "Noto Sans CJK SC", sans-serif; white-space: nowrap; }
.colon { font-family: "Noto Sans CJK TC", sans-serif; }
.vsep { width: 1px; height: 29px; background: #d6d8da; margin: 6px 18px 0 6px; }
.plus { margin-top: 10px; }
.dots { margin: 20px 0 0 22px; }
.winctl { margin: 0 -8px 0 auto; }

/* command field */
.cmd { height: 50px; background: #fff; border-bottom: 1px solid #dfe2e0; display: flex; align-items: flex-start; padding: 8px 0 0 10px; flex: none; }
.seg { display: flex; margin-top: 1px; }
.seg span { width: 40px; height: 32px; display: flex; align-items: center; justify-content: center; border: 1px solid #7fa6cd; border-radius: 5px 0 0 5px; border-right: 0; }
.seg .seg2 { border: 1px solid #0854a0; border-radius: 0 5px 5px 0; }
.cmdin { margin-left: 8px; width: 1644px; height: 34px; border: 1px solid #b4b4b4; border-radius: 2px; display: flex; align-items: center; justify-content: space-between; padding: 0 9px 2px; color: #222; font-size: 17px; }
.cmdin span { letter-spacing: -.4px; }
.split { margin: 1px 0 0 10px; width: 40px; height: 32px; border: 1px solid #7fa6cd; border-radius: 4px; display: flex; align-items: center; justify-content: center; }
.burger { margin: 9px 0 0 14px; }

/* shell header */
.shell { height: 58px; background: #354a5f; display: flex; align-items: center; padding: 0 0 2px 22px; flex: none; }
.sap { margin: -4px 0 0 28px; }
.saptx { font: 700 30px "Open Sans", "Noto Sans", sans-serif; fill: #fff; stroke: #fff; stroke-width: 1.6px; }
.shell h1 { margin: 0 0 0 569px; font-size: 24px; font-weight: 300; color: #f2f8ff; white-space: nowrap; line-height: 40px; }
.shell h1 span { letter-spacing: -.58px; font-weight: 400; }

/* application toolbar */
.bar { height: 58px; background: #fff; border-bottom: 1px solid #d5d5d5; display: flex; align-items: center; color: #0854a0; font-size: 17px; flex: none; }
.bar span { display: flex; align-items: center; white-space: nowrap; }
.bar i { width: 50px; display: flex; justify-content: center; }
.mnu { width: 95px; padding-left: 19px; gap: 8px; }
.b1 { margin-left: 16px; gap: 7px; width: 89px; }
.b2 { gap: 6px; width: 90px; }
.b3 { gap: 8px; }
.exit { margin-left: auto; margin-right: 20px; }

/* form */
.body { flex: 1; display: flex; flex-direction: column; font-size: 17px; }
.formrow { height: 60px; display: flex; align-items: center; padding: 17px 0 0 213px; color: #6a6d70; flex: none; line-height: 30px; }
.formrow label { width: 53px; letter-spacing: .3px; }
.ro { width: 371px; height: 31px; border: 1px solid #89919a; background: #f0f0f0; border-radius: 3px; margin-right: 7px; padding-left: 5px; font: 15px/31px "Liberation Mono", monospace; }
.tabs { height: 36px; display: flex; align-items: stretch; flex: none; color: #32363a; line-height: 37px; white-space: nowrap; }
.t1 { width: 79px; padding-left: 18px; }
.t2 { width: 82px; padding-left: 18px; }
.t3 { margin-left: 18px; width: 82px; height: 36px; padding-left: 12px; background: #98ff94; color: #18a868; position: relative; }
.t3::after { content: ""; position: absolute; left: 10px; bottom: -2px; width: 39px; height: 3px; background: #0c5a98; }
.panel { margin-left: 14px; width: 1799px; height: 673px; border: 1px solid #d5d6d8; background: #fff; padding: 40px 0 0 11px; flex: none; }
.designer { width: 1751px; height: 604px; border: 1px solid #666; display: flex; flex-direction: column; }
.menu { height: 28px; background: #354a5f; border: 1px solid #7391b0; display: flex; padding-left: 23px; color: #d4e8fb; line-height: 27px; letter-spacing: -.65px; font-size: 16px; flex: none; }
.menu u { text-underline-offset: 2px; text-decoration-thickness: 1px; }

/* designer toolbars */
.tb { display: flex; align-items: center; background: #efefef; border-right: 1px solid #999; flex: none; fill: #a0a0a0; }
.grip { width: 2px; height: 22px; background: repeating-linear-gradient(#b8b8b8 0 2px, transparent 2px 5px); flex: none; }
.ic { width: 27px; height: 27px; flex: none; }
.hot { background: #c0dcf3; box-shadow: inset 0 0 0 1px #90c4ee; }
.sp { width: 1px; height: 22px; background: #888; margin: 0 2px 0 3px; flex: none; }
.r1 { width: 251px; height: 27px; padding-left: 5px; }
.r1 .sp { margin: 0 2px; }
.r2 { width: 467px; height: 29px; border-top: 1px solid #999; border-bottom: 1px solid #999; padding-left: 4px; }
.r2 .grip { margin-right: 2px; }
.r3 { width: 453px; height: 28px; border-bottom: 1px solid #999; padding-left: 3px; }
.r3 .sp { margin: 0 2px; }
.r4 { width: 402px; height: 26px; padding-left: 2px; }
.r4 .grip { margin-right: 3px; }
.r4 .ic { height: 26px; }
.r4 .sp { margin: 0 3px 0 2px; }
.r4 .s5 { margin: 0 2px; }
.combo { height: 25px; background: #fff; border: 1px solid #ccc; display: flex; align-items: center; justify-content: space-between; padding: 1px 5px 1px 1px; color: #a0a0a0; flex: none; }
.combo b { height: 21px; background: #efefef; }
.c1 { width: 150px; margin-left: 5px; }
.c1 b { width: 126px; }
.c2 { width: 190px; margin-left: 5px; }
.c2 b { width: 164px; }
.c3 { width: 48px; margin-left: 2px; }
.c3 b { width: 22px; }
.zoom { width: 70px; height: 25px; background: #fff; border: 1px solid #777; margin-left: 3px; display: flex; align-items: center; justify-content: space-between; padding: 0 5px 2px 3px; font-size: 13px; color: #000; letter-spacing: -.5px; flex: none; }
.fb, .fi, .fu { text-align: center; font-size: 17px; line-height: 25px; color: #999; font-weight: 800; }
.fi { font-family: "Liberation Serif", serif; font-style: italic; }
.fu { text-decoration: underline; text-underline-offset: 3px; }
.strip { height: 11px; background: #efefef; flex: none; padding: 5px 0 0 835px; }
.work { height: 443px; display: flex; flex: none; }
.foot { height: 10px; background: #efefef; border-bottom: 1px solid #999; padding-left: 834px; flex: none; }

/* data view */
.left { width: 235px; height: 443px; background: #efefef; border-top: 1px solid #aaa; border-bottom: 1px solid #999; position: relative; padding: 2px 0 0 4px; flex: none; }
.ltitle { display: flex; align-items: center; height: 13px; }
.ltitle b { width: 198px; height: 13px; background: linear-gradient(90deg, #bccad8, #d6e4f2); margin-right: 6px; }
.ltabs { display: flex; height: 21px; margin-top: 3px; font-size: 13px; line-height: 19px; color: #000; white-space: nowrap; }
.ltabs span { overflow: hidden; border-top: 1px solid #777; height: 20px; }
.l1 { width: 45px; padding-left: 10px; border: 1px solid #777; letter-spacing: -.3px; }
.l2 { width: 59px; padding-left: 13px; border: 1px solid #777; border-left: 0; letter-spacing: -.4px; }
.l3 { width: 89px; padding-left: 7px; font-weight: 700; display: flex; align-items: center; gap: 5px; }
.tree { position: relative; width: 226px; height: 391px; border: 1px solid #8b8b93; background: #fff; margin-top: 3px; padding-top: 1px; color: #333; font-size: 13px; letter-spacing: -.3px; }
.tree::after { content: ""; position: absolute; left: 204px; top: 1px; width: 1px; height: 361px; background: #ccc; }
.guides { position: absolute; left: 0; top: -1px; }
.n { position: relative; height: 20px; display: flex; align-items: center; white-space: nowrap; }
.n em { width: 11px; height: 11px; border: 1px solid #888; background: linear-gradient(#555, #555) center/7px 1px no-repeat #fff; }
.d0 { padding-left: 7px; }
.d0 svg { margin: 0 6px 0 7px; }
.d1 { padding-left: 26px; }
.d1 svg { margin: 0 4px 0 6px; }
.d1 svg[width="14"] { margin: 0 5px 0 7px; }
.d2 { padding-left: 61px; }
.d2 span { margin-left: 4px; max-width: 122px; overflow: hidden; }
.g { padding-left: 45px; }
.g svg { margin-left: 6px; }
.g span { margin-left: 6px; }
.d3 { padding-left: 80px; }
.d3 span { margin-left: 4px; }
.n .bd { position: absolute; left: 206px; top: 0; width: 17px; height: 17px; }
.hscroll { display: flex; align-items: center; height: 19px; margin: 8px 2px 0; background: #f0f0f0; padding: 0 8px 0 5px; justify-content: space-between; }
.hscroll b { width: 174px; height: 19px; background: #cdcdcd; }
.highlight { position: absolute; left: 2px; top: 31px; width: 222px; height: 399px; background: rgba(51, 255, 41, .5); }
.spl { position: absolute; right: 0; top: 180px; }

/* layout editor */
.center { width: 1242px; background: #cacaca; flex: none; }
.vtabs { height: 29px; display: flex; align-items: flex-end; padding-left: 5px; border-bottom: 1px solid #999; gap: 2px; }
.vt { height: 26px; background: linear-gradient(#efefef, #d8d8d8); border: 1px solid #8f8f8f; border-bottom: 0; border-radius: 5px 5px 0 0; display: flex; align-items: center; font-size: 17px; color: #000; padding: 0 3px 0 5px; white-space: nowrap; letter-spacing: -.5px; }
.vt span { flex: 1; padding-left: 7px; line-height: 22px; }
.a { width: 144px; background: #fff; font-weight: 700; margin-bottom: -1px; letter-spacing: -.5px; height: 27px; padding-left: 6px; }
.b { width: 168px; }
.b span { padding-left: 8px; }
.c { width: 160px; padding-left: 4px; }
.hruler, .vruler { background: #fff; }
.canvasrow { display: flex; }
.sheet { background: linear-gradient(#cacaca, #e6e6e6); }
.vscroll { width: 20px; height: 391px; background: #efefef; display: flex; flex-direction: column; align-items: center; padding-top: 7px; }
.vscroll b { width: 19px; height: 161px; background: #cacaca; margin: 7px 0 195px; }
.rul { font: 14.5px "Noto Sans", sans-serif; fill: #000; }
.ttl { font: 400 48.5px "Noto Sans CJK SC", sans-serif; stroke: #000; stroke-width: .4px; }
.lb { font: 500 13.4px "Liberation Serif", "Noto Sans CJK SC", serif; }
.code { font: 13.7px "Liberation Mono", monospace; }

/* palettes on the right */
.right { width: 271px; margin-left: 1px; background: #efefef; position: relative; font-size: 12px; color: #222; flex: none; }
.rp { height: 23px; border-top: 1px solid #999; padding: 2px 4px 0 6px; }
.rt { display: flex; height: 13px; align-items: center; }
.rt b { width: 234px; height: 13px; line-height: 12px; font-weight: 400; font-size: 11.5px; letter-spacing: -.42px; padding-left: 2px; background: linear-gradient(90deg, #bccad8, #d6e4f2); margin-right: 6px; white-space: nowrap; color: #111; }
.rp p { margin: 3px 0 0; height: 2px; background: #b5b5b5; }
.rp p i { display: block; height: 1px; background: #444; }
.rtabs { position: relative; display: flex; align-items: center; margin-top: 2px; height: 21px; padding-left: 8px; color: #000; font-size: 13px; line-height: 20px; }
.rtbg { position: absolute; left: 0; top: 0; }
.rtabs strong { position: relative; width: 49px; font-size: 13px; }
.rtabs svg:not(.rtbg) { position: relative; }
.rtabs span { position: relative; margin-left: 19px; letter-spacing: -.35px; }
.spr { position: absolute; left: 0; top: 181px; }

/* message bar */
.status { margin: 39px 0 0 9px; width: 1824px; height: 49px; border: 1px solid #7b8a9a; border-radius: 6px; background: #fff; display: flex; align-items: center; padding: 0 17px 1px 14px; flex: none; }
.msg { margin-left: 15px; font-size: 16px; letter-spacing: -.3px; white-space: nowrap; }
.status button { margin-left: auto; width: 44px; height: 32px; border: 0; border-radius: 4px; background: #0a6ed1; color: #fff; font: 700 16px "Noto Sans CJK SC", sans-serif; padding: 0 0 1px; }
.status a { margin-left: 15px; font-size: 16px; color: #0854a0; }

/* taskbar */
.task { width: 78px; height: 1080px; background: linear-gradient(#2b3035 0, #33353a 18%, #222834 33%, #2a2f34 42%, #2a343f 60%, #202229 76%, #23252c 90%, #2e3843 100%); color: #fff; display: flex; flex-direction: column; }
.s50 { height: 50px; display: flex; align-items: center; justify-content: center; flex: none; }
.s50:nth-child(3) { height: 49px; }
.app1 { height: 48px; margin: 0 0 11px; display: flex; align-items: center; justify-content: center; border-right: 3px solid transparent; padding-left: 3px; flex: none; }
.s50 + .app1 { margin-top: 10px; }
.run { border-right-color: #76b9ed; }
.wide { border-right: 5px solid #5f96c4; padding-left: 5px; }
.cur { background: linear-gradient(90deg, transparent 36px, #4a5056 36px 41px, #5c6166 41px); height: 52px; margin-top: -2px; margin-bottom: 9px; }
.bili { font: 700 15px "Noto Sans", sans-serif; fill: #fff; }
.pp { font: 700 12px "Noto Sans", sans-serif; fill: #fff; }
.ty { font: 22px "Liberation Serif", serif; fill: #222; stroke: #222; }
.tray { margin-top: 51px; display: flex; flex-direction: column; align-items: center; white-space: nowrap; }
.ime { margin: -9px 2px 22px 0; font: 20px/30px "Noto Sans CJK SC", sans-serif; }
.clk { font-size: 15px; line-height: 22px; letter-spacing: -.1px; }
.date { font-size: 16px; }
.noti { margin-top: 25px; }
.peek { margin: auto 0 5px; height: 1px; background: #8b9197; }
```
FILE: script.js
```js
// Rulers, grid and form objects of the layout editor, in editor pixels.
const IN = 98.57, X0 = 305, Y0 = 569;
let h = '', hn = '', v = '', vn = '';
for (let k = 0; k <= 93; k++) {
  const x = Math.round(X0 + k * IN / 8) + 0.5;
  const top = k % 8 === 0 ? 540 : k % 4 === 0 ? 544 : k % 2 === 0 ? 547 : 549;
  h += `M${x} ${top}V553`;
  if (k % 8 === 0) hn += `<text x="${x + 1}" y="546" class="rul">${k / 8}</text>`;
}
for (let k = 0; k <= 30; k++) {
  const y = Math.round(Y0 + k * IN / 8) + 0.5;
  const left = k % 8 === 0 ? 276 : k % 4 === 0 ? 280 : k % 2 === 0 ? 283 : 285;
  v += `M${left} ${y}H289`;
  if (k % 8 === 0) vn += `<text x="262.500" y="${y + 14}" class="rul">${k / 8}</text>`;
}
document.getElementById('hruler').innerHTML =
  `<path d="${h}" stroke="#666"/><path d="M262 553.500H1504M289.500 532V554M914.500 532V554M1457.500 534V554" stroke="#555"/><path d="M265 537.500h22M270.500 535v14" stroke="#000"/>${hn}`;
document.getElementById('vruler').innerHTML =
  `<path d="${v}" stroke="#666"/><path d="M289.500 554V945M262 657.500H289" stroke="#444"/>${vn}`;

let dots = '';
for (let j = 0; j <= 30; j++)
  for (let k = 0; k <= 93; k++)
    dots += `M${Math.round(X0 + k * IN / 8)} ${Math.round(Y0 + j * IN / 8)}h1v1h-1z`;

const labels = [
  [448.5, 722, 60, '出库单号:'], [689.5, 722, 60, '申请部门:'], [930, 722, 60, '申请日期:'],
  [448.5, 756, 47, '交接点:'], [689.5, 756, 47, '申请人:'], [928.5, 756, 61, '需求日期:'],
  [458, 792, 27, '序号'], [550.5, 792, 27, '物料'], [666, 792, 54, '物料编号'], [771.5, 792, 27, '数量'],
  [826.5, 792, 27, '单位'], [917.5, 792, 50, 'SAP批次'], [1062.5, 792, 67, '供应商批次'], [1238, 792, 27, '备注']
];
const cells = [[444, 498], [506, 621], [629, 757], [765, 806], [814, 868], [876, 1016], [1023, 1175], [1183, 1323]];
// Bar edges at 2.24 units per pixel; the third value picks a grey bar.
const bars = [
  [626, 632, 1], [637, 643, 1], [650, 654], [658, 663], [668, 672], [675, 680], [683, 690],
  [694, 697], [701, 705], [709, 714], [717, 721], [725, 734], [738, 748], [750, 760], [764, 768, 1], [772, 776],
  [781, 794, 1], [797, 808], [812, 827], [831, 837], [843, 851], [856, 860], [863, 867], [871, 874], [876, 883],
  [885, 889], [893, 899, 1], [905, 909], [914, 917, 1], [920, 926], [929, 934], [934, 943, 2], [943, 947]
];
const code = bars.map(([a, b, g]) => {
  const x = 900 + a / 2.24, tall = b <= 690 || a >= 885;
  return `<rect x="${x}" y="708.5" width="${(b - a) / 2.24}" height="${tall ? 53 : 39}" fill="${g === 1 ? '#777' : g === 2 ? '#3a3a3a' : '#000'}"/>`;
}).join('');
document.getElementById('sheet-canvas').innerHTML =
  `<path d="M1457 572h4v373h-4z" fill="#9a9a9a"/><path d="M304.5 945V568.5H1457V945" fill="#fff" stroke="#000"/>
  <path d="M1458 570V945" stroke="#444"/>
  <path d="${dots}" fill="#8a80e6" shape-rendering="crispEdges"/>
  <path d="M330.5 945V618.5H1432.5V945" fill="none" stroke="#d88be0" stroke-dasharray="4 1.500"/>
  <text x="764" y="664" textLength="193" class="ttl">交接清单</text>` +
  labels.map(([x, y, w, t]) => `<text x="${x}" y="${y}" textLength="${w}" class="lb">${t}</text>`).join('') +
  cells.map(([a, b]) => `<rect x="${a + 0.5}" y="802.5" width="${b - a - 0.5}" height="27" fill="none" stroke="#444"/>`).join('') +
  code + `<text x="1210" y="758.500" textLength="82" class="code">1234567890</text>
  <circle cx="1431.500" cy="616.500" r="6.800" fill="url(#gBall)" stroke="#9ab4cc"/><path d="M1429 623l2 3 2-3z" fill="#6f9fca"/>
  <path d="M1430.500 615.500h1.500v5M1429.500 620.500h4.500" fill="none" stroke="#345" stroke-width="1.500"/><circle cx="1431.500" cy="612.500" r="1.200" fill="#345"/>`;
```
